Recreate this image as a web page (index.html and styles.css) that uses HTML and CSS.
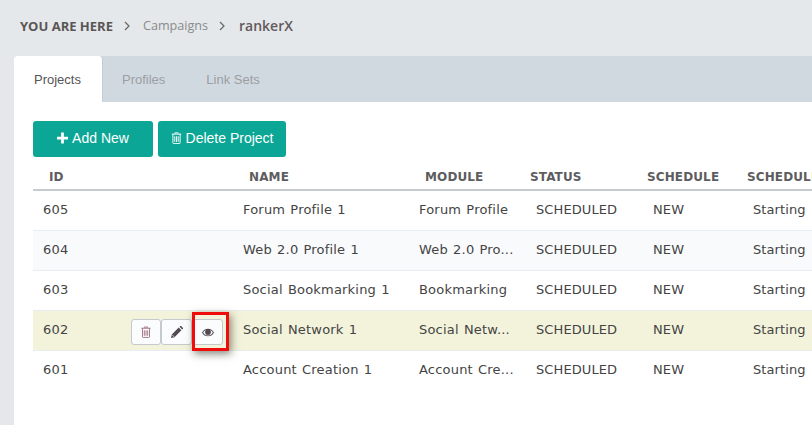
FILE: index.html
```html
<!DOCTYPE html>
<html lang="en">
<head>
<meta charset="utf-8">
<title>rankerX Projects</title>
<link rel="stylesheet" href="styles.css">
</head>
<body>
<nav class="crumbs">
  <strong class="crumb-lead">YOU ARE HERE</strong>
  <svg class="chev" viewBox="0 0 6 10"><path d="M1 1l4 4-4 4" fill="none" stroke="currentColor" stroke-width="1.2"/></svg>
  <span class="crumb-link">Campaigns</span>
  <svg class="chev" viewBox="0 0 6 10"><path d="M1 1l4 4-4 4" fill="none" stroke="currentColor" stroke-width="1.2"/></svg>
  <span class="crumb-current">rankerX</span>
</nav>
<main class="panel">
  <div class="tabs">
    <div class="tab tab-active">Projects</div>
    <div class="tab">Profiles</div>
    <div class="tab">Link Sets</div>
  </div>
  <div class="content">
    <div class="toolbar">
      <button class="btn btn-add">
        <svg class="btn-icon" viewBox="0 0 12 12"><path d="M4.5 0h3v4.5H12v3H7.5V12h-3V7.5H0v-3h4.5z" fill="currentColor"/></svg>
        Add New
      </button>
      <button class="btn btn-del">
        <svg class="btn-icon" viewBox="0 0 12 14"><path d="M4 2V1h4v1M.5 2.500h11M1.800 2.500v10.200c0 .5.300.8.800.8h6.800c.5 0 .8-.3.800-.8V2.500M4 5v6.500M6 5v6.500M8 5v6.500" fill="none" stroke="currentColor" stroke-width="1.100"/></svg>
        Delete Project
      </button>
    </div>
    <table class="grid">
      <colgroup>
        <col class="c-id"><col class="c-name"><col class="c-module"><col class="c-status"><col class="c-sched"><col class="c-start">
      </colgroup>
      <thead>
        <tr><th>ID</th><th>NAME</th><th>MODULE</th><th>STATUS</th><th>SCHEDULE</th><th>SCHEDULE</th></tr>
      </thead>
      <tbody>
        <tr><td>605</td><td>Forum Profile 1</td><td>Forum Profile</td><td class="lab">SCHEDULED</td><td class="lab">NEW</td><td class="lab">Starting</td></tr>
        <tr class="alt"><td>604</td><td>Web 2.0 Profile 1</td><td>Web 2.0 Pro...</td><td class="lab">SCHEDULED</td><td class="lab">NEW</td><td class="lab">Starting</td></tr>
        <tr><td>603</td><td>Social Bookmarking 1</td><td>Bookmarking</td><td class="lab">SCHEDULED</td><td class="lab">NEW</td><td class="lab">Starting</td></tr>
        <tr class="hover">
          <td>
            <div class="id-cell">
              <span>602</span>
              <div class="actions">
                <button class="act act-first">
                  <svg class="act-del" viewBox="0 0 12 14"><path d="M4 2V1h4v1M.5 2.500h11M1.800 2.500v10.200c0 .5.300.8.800.8h6.800c.5 0 .8-.3.800-.8V2.500M4 5v6.500M6 5v6.500M8 5v6.500" fill="none" stroke="currentColor" stroke-width="1.100"/></svg>
                </button>
                <button class="act">
                  <svg class="act-edit" viewBox="0 0 12 12"><path d="M0 12l.8-3.500L7.700 1.600l2.700 2.700-6.900 6.900zM8.500.8L9.300 0q.4-.3.800 0l1.900 1.900q.3.400 0 .8l-.8.800z" fill="currentColor"/><path d="M1.200 8.900l2 2" stroke="#fbfcfd" stroke-width=".7"/></svg>
                </button>
                <button class="act">
                  <svg class="act-eye" viewBox="0 0 14 10"><path d="M0 5C1.500 2 4 .5 7 .5S12.500 2 14 5c-1.500 3-4 4.500-7 4.500S1.500 8 0 5zm1.300 0C2.500 7.200 4.500 8.500 7 8.500s4.500-1.300 5.700-3.500C11.900 3.600 10.800 2.600 9.500 2c.6.700.9 1.500.9 2.500a3.400 3.400 0 0 1-6.800 0c0-1 .3-1.800.9-2.500C3.200 2.600 2.100 3.600 1.300 5z" fill="currentColor"/><circle cx="6" cy="3.500" r="1" fill="currentColor"/></svg>
                </button>
              </div>
            </div>
          </td>
          <td>Social Network 1</td><td>Social Netw...</td><td class="lab">SCHEDULED</td><td class="lab">NEW</td><td class="lab">Starting</td>
        </tr>
        <tr class="last"><td>601</td><td>Account Creation 1</td><td>Account Cre...</td><td class="lab">SCHEDULED</td><td class="lab">NEW</td><td class="lab">Starting</td></tr>
      </tbody>
    </table>
  </div>
  <div class="annot"></div>
</main>
</body>
</html>
```

FILE: styles.css
```css
* { box-sizing: border-box; }
html, body { height: 100%; }
body {
  margin: 0;
  background: #e4e8eb;
  overflow: hidden;
  display: flex;
  flex-direction: column;
  font-family: "DejaVu Sans", sans-serif;
}
.crumbs {
  height: 56px;
  flex: none;
  padding: 0 0 5px 20px;
  display: flex;
  align-items: center;
  font-family: "Open Sans", sans-serif;
  font-size: 12.600px;
  color: #5f5a5a;
}
.crumb-lead { font-weight: 700; font-size: 13px; color: #5a5555; }
.crumb-link { color: #8a8a8a; margin-left: -1px; }
.crumb-current { font-size: 14px; font-weight: 600; color: #62595c; }
.chev { width: 6px; height: 10px; margin: 0 14px 0 11px; color: #666; }
.panel {
  position: relative;
  flex: 1;
  margin-left: 14px;
  width: 900px;
  background: #fff;
  border-top-left-radius: 4px;
}
.tabs {
  height: 46px;
  display: flex;
  background: #d1d9e0;
  font-family: "Liberation Sans", sans-serif;
  font-size: 13px;
  border-top-left-radius: 4px;
}
.tab {
  padding: 1px 22px 0 19px;
  line-height: 46px;
  color: #9a9fa3;
}
.tab-active {
  width: 89px;
  padding-left: 20px;
  background: #fff;
  color: #555;
  border-right: 1px solid #c2ccd4;
  border-top-left-radius: 4px;
  border-top-right-radius: 4px;
}
.content { padding: 19px 0 0 19px; }
.toolbar { display: flex; gap: 5px; height: 36px; }
.btn {
  border: 0;
  height: 36px;
  border-radius: 3px;
  background: #0ba696;
  color: #fff;
  font-family: "Liberation Sans", sans-serif;
  font-size: 14px;
  display: flex;
  align-items: center;
  justify-content: center;
  gap: 4px;
  padding: 0 0 2px;
}
.btn-add { width: 120px; }
.btn-del { width: 128px; }
.btn-icon { height: 12px; width: 11px; }
.grid {
  width: 881px;
  table-layout: fixed;
  border-collapse: collapse;
  font-size: 13px;
  color: #444;
}
.c-id { width: 200px; }
.c-name { width: 176px; }
.c-module { width: 105px; }
.c-status { width: 117px; }
.c-sched { width: 100px; }
.c-start { width: 183px; }
th {
  height: 33px;
  padding: 8px 0 0 16px;
  text-align: left;
  font-size: 12px;
  font-weight: 700;
  letter-spacing: 0.12px;
  color: #5d5c5f;
  white-space: nowrap;
  border-bottom: 2px solid #c6cbd0;
}
td {
  height: 40px;
  padding: 0 0 2px 10px;
  border-bottom: 1px solid #e8edf1;
  white-space: nowrap;
  overflow: hidden;
  letter-spacing: 0.2px;
  word-spacing: 0.8px;
}
td.lab { padding-left: 22px; letter-spacing: 0.1px; }
tr.alt td { background: #f9fafb; }
tr.hover td { background: #f3f3dc; }
tr.last td { border-bottom: 0; }
.id-cell { display: flex; align-items: center; }
.actions { display: flex; margin-left: 63px; margin-top: 6px; }
.act {
  width: 31px;
  height: 26px;
  padding: 0;
  display: flex;
  align-items: center;
  justify-content: center;
  background: #fbfcfd;
  border: 1px solid #c4c9ce;
  border-radius: 3px;
  color: #524a52;
}
.act-first { width: 30px; }
.act-del { width: 10px; height: 12px; color: #a0707e; }
.act-edit { width: 12px; height: 12px; }
.act-eye { width: 12px; height: 9px; }
.annot {
  position: absolute;
  left: 178px;
  top: 256px;
  width: 37px;
  height: 39px;
  border: 3px solid #ee0c0c;
  box-shadow: 2px 3px 8px rgba(60, 60, 40, 0.6);
}
```
